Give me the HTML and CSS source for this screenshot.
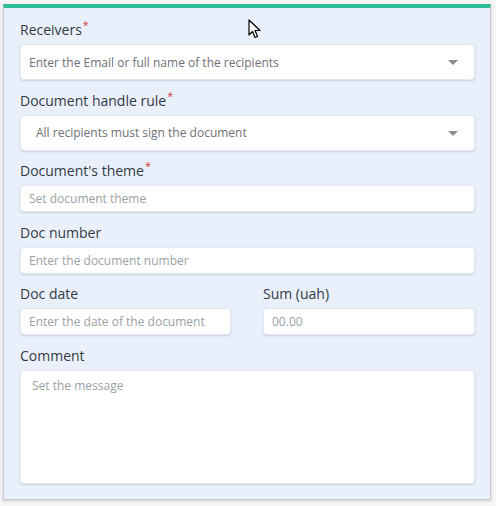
FILE: index.html
```html
<!DOCTYPE html>
<html lang="en">
<head>
<meta charset="utf-8">
<title>Document form</title>
<link rel="stylesheet" href="styles.css">
</head>
<body>
<div class="panel">
  <div class="field">
    <label class="label">Receivers<span class="req">*</span></label>
    <div class="select"><span class="select-text">Enter the Email or full name of the recipients</span><span class="caret"></span></div>
  </div>
  <div class="field">
    <label class="label">Document handle rule<span class="req">*</span></label>
    <div class="select"><span class="select-text indent">All recipients must sign the document</span><span class="caret"></span></div>
  </div>
  <div class="field">
    <label class="label">Document's theme<span class="req">*</span></label>
    <input class="input" type="text" placeholder="Set document theme">
  </div>
  <div class="field">
    <label class="label">Doc number</label>
    <input class="input" type="text" placeholder="Enter the document number">
  </div>
  <div class="row">
    <div class="field">
      <label class="label">Doc date</label>
      <input class="input" type="text" placeholder="Enter the date of the document">
    </div>
    <div class="field">
      <label class="label">Sum (uah)</label>
      <input class="input" type="text" placeholder="00.00">
    </div>
  </div>
  <div class="field">
    <label class="label">Comment</label>
    <textarea class="textarea" placeholder="Set the message"></textarea>
  </div>
</div>
<svg class="cursor" width="14" height="20" viewBox="0 0 14 20">
  <path d="M1 1 L1 16 L4.5 12.5 L7 18.5 L9.5 17.5 L7 11.5 L12 11.5 Z" fill="#fff" stroke="#000" stroke-width="1.2" stroke-linejoin="round"/>
</svg>
</body>
</html>
```
FILE: styles.css
```css
html, body {
  margin: 0;
  padding: 0;
}
body {
  background: #f6f6f7;
  font-family: "Open Sans", "Liberation Sans", sans-serif;
  width: 496px;
  height: 506px;
  position: relative;
  overflow: hidden;
}
.panel {
  box-sizing: border-box;
  margin: 4px 0 0 3px;
  width: 488px;
  height: 496px;
  background: #e9f0fb;
  border-top: 4px solid #2ebf98;
  border-left: 1px solid #c9ccd2;
  border-right: 1px solid #c9ccd2;
  border-bottom: 1px solid #c9ccd2;
  box-shadow: 0 1px 3px rgba(0, 0, 0, 0.18);
  padding: 12px 15px 0 16px;
  display: flex;
  flex-direction: column;
  gap: 10.5px;
}
.field {
  display: flex;
  flex-direction: column;
  gap: 4px;
}
.row {
  display: grid;
  grid-template-columns: 211px 212px;
  justify-content: space-between;
}
.label {
  font-size: 14px;
  line-height: 20px;
  height: 20px;
  color: #333b45;
  white-space: nowrap;
}
.req {
  color: #d2403d;
  font-size: 11px;
  position: relative;
  top: -6px;
  margin-left: 1px;
}
.select,
.input,
.textarea {
  box-sizing: border-box;
  width: 100%;
  background: #fff;
  border: 1px solid #e4e9f1;
  border-radius: 4px;
  box-shadow: 0 1px 2px rgba(60, 70, 90, 0.2);
  font-family: "Open Sans", "Liberation Sans", sans-serif;
}
.select {
  height: 36px;
  display: flex;
  align-items: center;
  justify-content: space-between;
  padding: 0 16px 0 8px;
}
.select-text {
  font-size: 12px;
  color: #6e7175;
}
.select-text.indent {
  padding-left: 7px;
}
.caret {
  width: 0;
  height: 0;
  border-left: 5px solid transparent;
  border-right: 5px solid transparent;
  border-top: 5px solid #8a8c8f;
  margin-top: 1px;
}
.input {
  height: 27px;
  padding: 0 8px;
  font-size: 12px;
  color: #333;
  outline: none;
}
.input::placeholder,
.textarea::placeholder {
  color: #9c9fa3;
}
.textarea {
  height: 114px;
  resize: none;
  padding: 6px 11px;
  font-size: 12px;
  outline: none;
  display: block;
}
.cursor {
  position: absolute;
  left: 248px;
  top: 19px;
}
```
